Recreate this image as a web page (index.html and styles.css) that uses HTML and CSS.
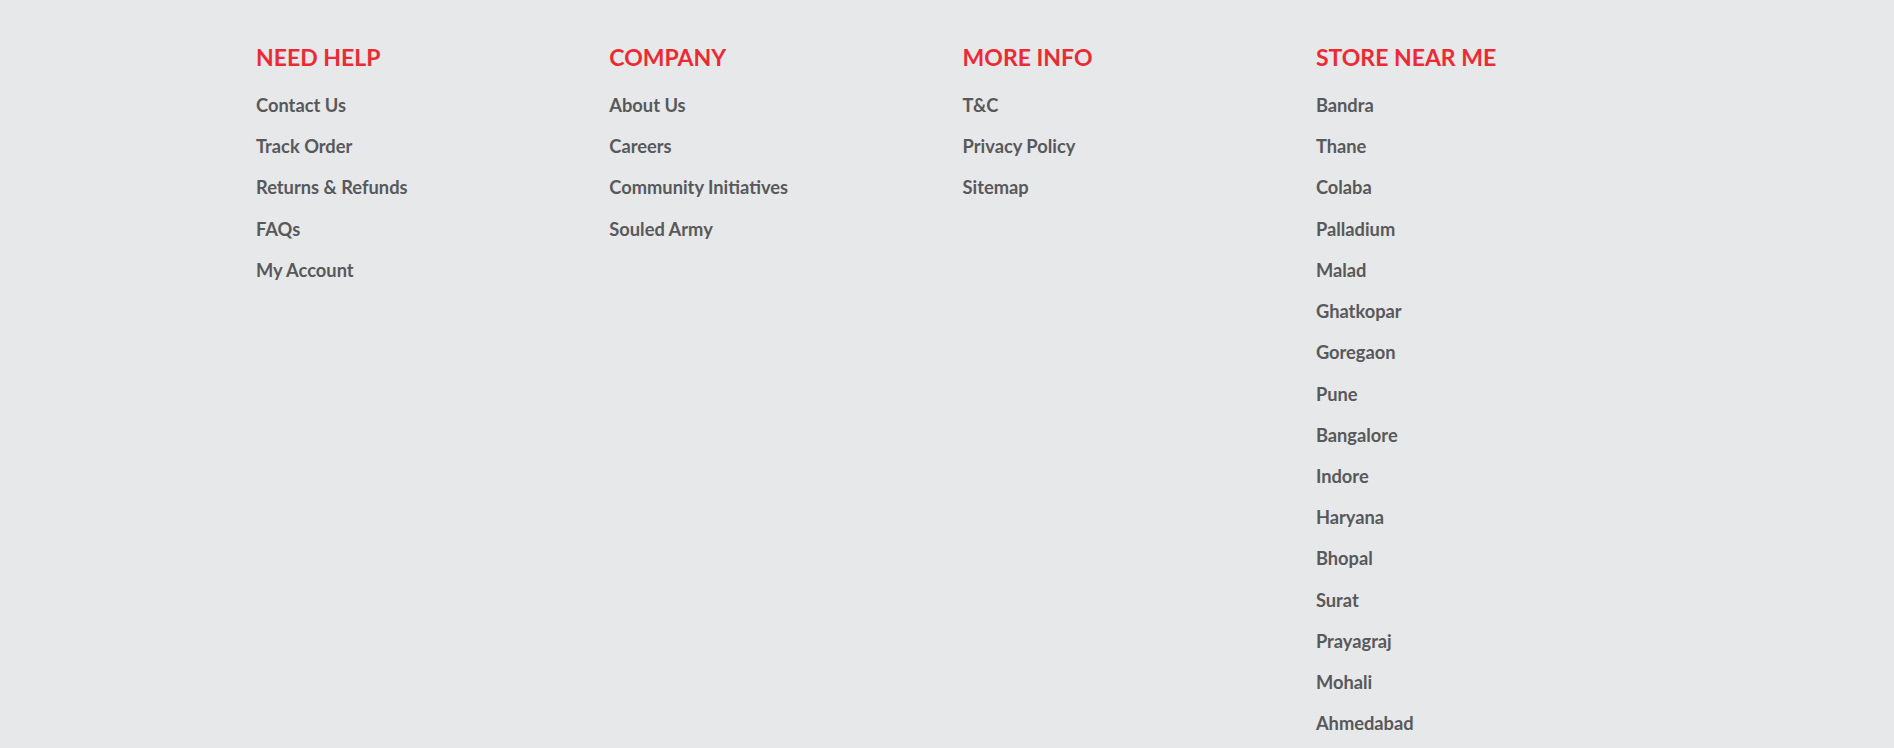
FILE: index.html
```html
<!DOCTYPE html>
<html>
<head>
<meta charset="utf-8">
<link rel="stylesheet" href="styles.css">
</head>
<body>
<footer class="footer">
  <div class="col">
    <h3 class="col-title">NEED HELP</h3>
    <ul class="links">
      <li>Contact Us</li>
      <li>Track Order</li>
      <li>Returns &amp; Refunds</li>
      <li>FAQs</li>
      <li>My Account</li>
    </ul>
  </div>
  <div class="col">
    <h3 class="col-title">COMPANY</h3>
    <ul class="links">
      <li>About Us</li>
      <li>Careers</li>
      <li>Community Initiatives</li>
      <li>Souled Army</li>
    </ul>
  </div>
  <div class="col">
    <h3 class="col-title">MORE INFO</h3>
    <ul class="links">
      <li>T&amp;C</li>
      <li>Privacy Policy</li>
      <li>Sitemap</li>
    </ul>
  </div>
  <div class="col">
    <h3 class="col-title">STORE NEAR ME</h3>
    <ul class="links">
      <li>Bandra</li>
      <li>Thane</li>
      <li>Colaba</li>
      <li>Palladium</li>
      <li>Malad</li>
      <li>Ghatkopar</li>
      <li>Goregaon</li>
      <li>Pune</li>
      <li>Bangalore</li>
      <li>Indore</li>
      <li>Haryana</li>
      <li>Bhopal</li>
      <li>Surat</li>
      <li>Prayagraj</li>
      <li>Mohali</li>
      <li>Ahmedabad</li>
    </ul>
  </div>
</footer>
</body>
</html>
```

FILE: styles.css
```css
html, body {
  margin: 0;
  padding: 0;
  background: #e7e8e9;
  height: 100%;
  overflow: hidden;
}
body {
  font-family: "Lato", "Liberation Sans", sans-serif;
}
.footer {
  display: grid;
  grid-template-columns: repeat(4, 353.3px);
  padding: 43px 0 0 256px;
}
.col-title {
  margin: 0 0 23px;
  font-size: 23px;
  font-weight: 700;
  color: #ed2a33;
  line-height: 28px;
}
.links {
  list-style: none;
  margin: 0;
  padding: 0;
  display: flex;
  flex-direction: column;
  gap: 19.23px;
}
.links li {
  font-size: 18.3px;
  font-weight: 700;
  color: #58595b;
  line-height: 22px;
}
```
